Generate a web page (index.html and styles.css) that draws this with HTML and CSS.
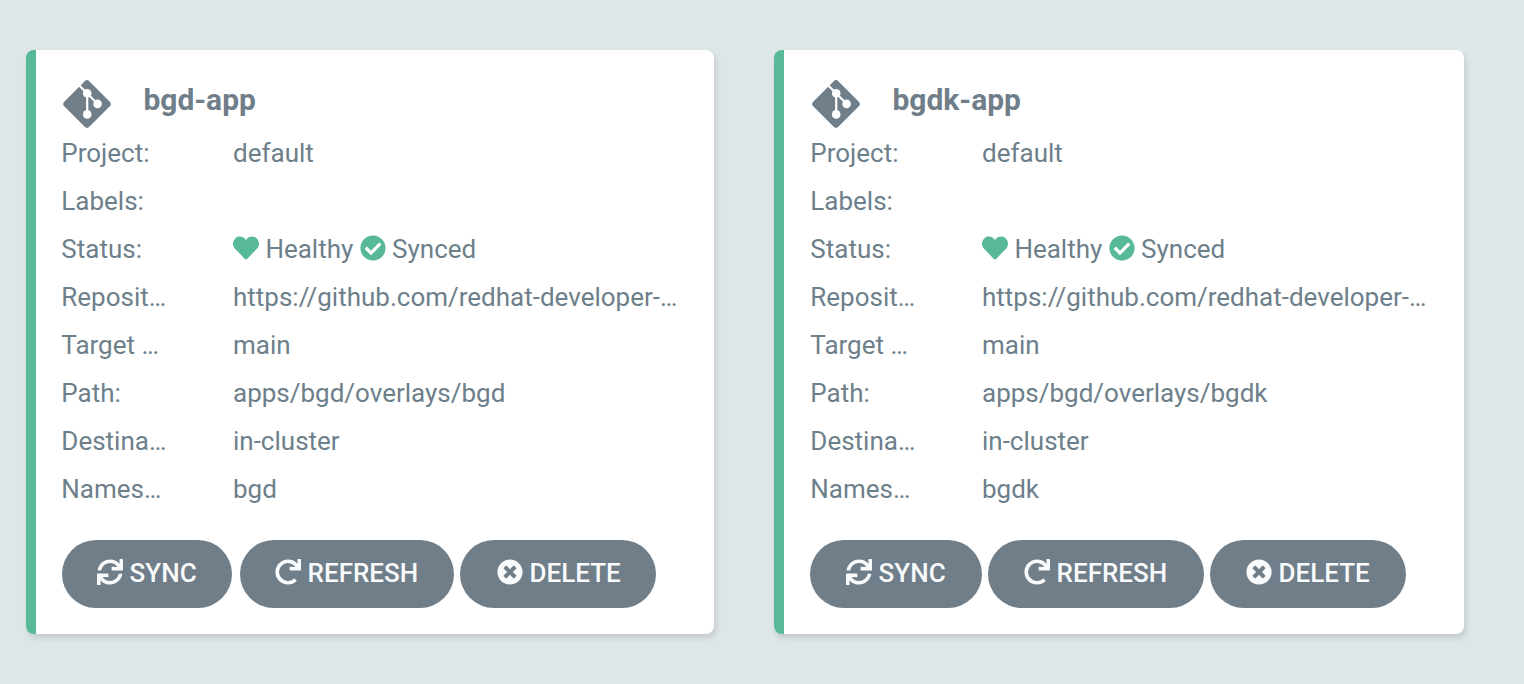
FILE: index.html
```html
<!DOCTYPE html>
<html lang="en">
<head>
<meta charset="utf-8">
<title>Applications</title>
<link rel="stylesheet" href="styles.css">
</head>
<body>
<svg class="sprite" aria-hidden="true">
  <symbol id="git" viewBox="0 0 48 48">
    <path d="M21.7 1.2Q24-1 26.3 1.2L46.8 21.7Q49 24 46.8 26.3L26.3 46.8Q24 49 21.7 46.8L1.2 26.3Q-1 24 1.2 21.7Z" fill="currentColor"/>
    <path d="M15.8 5 24 13.2 34.3 23.6M24.2 13V34" fill="none" stroke="#fff" stroke-width="2.2"/>
    <circle cx="24.2" cy="13.2" r="4.3" fill="#fff"/><circle cx="34.6" cy="23.9" r="4.3" fill="#fff"/><circle cx="24.2" cy="34.4" r="4.3" fill="#fff"/>
  </symbol>
  <symbol id="heart" viewBox="0 0 512 512"><path fill="currentColor" d="M462.3 62.6C407.5 15.9 326 24.3 275.7 76.2L256 96.5l-19.7-20.3C186.1 24.3 104.5 15.9 49.7 62.6c-62.8 53.6-66.1 149.8-9.9 207.9l193.5 199.8c12.5 12.9 32.8 12.9 45.3 0l193.5-199.8c56.3-58.1 53-154.3-9.8-207.9z"/></symbol>
  <symbol id="check" viewBox="0 0 512 512"><path fill="currentColor" d="M504 256c0 136.967-111.033 248-248 248S8 392.967 8 256 119.033 8 256 8s248 111.033 248 248zM227.314 387.314l184-184c6.248-6.248 6.248-16.379 0-22.627l-22.627-22.627c-6.248-6.249-16.379-6.249-22.628 0L216 308.118l-70.059-70.059c-6.248-6.248-16.379-6.248-22.628 0l-22.627 22.627c-6.248 6.248-6.248 16.379 0 22.627l104 104c6.249 6.249 16.379 6.249 22.628.001z"/></symbol>
  <symbol id="times" viewBox="0 0 512 512"><path fill="currentColor" d="M256 8C119 8 8 119 8 256s111 248 248 248 248-111 248-248S393 8 256 8zm121.6 313.1c4.7 4.7 4.7 12.3 0 17L338 377.6c-4.7 4.7-12.3 4.7-17 0L256 312l-65.1 65.6c-4.7 4.7-12.3 4.7-17 0L134.4 338c-4.7-4.7-4.7-12.3 0-17l65.6-65-65.6-65.1c-4.7-4.7-4.7-12.3 0-17l39.6-39.6c4.7-4.7 12.3-4.7 17 0l65 65.7 65.1-65.6c4.7-4.7 12.3-4.7 17 0l39.6 39.6c4.7 4.7 4.7 12.3 0 17L312 256l65.6 65.1z"/></symbol>
  <symbol id="redo" viewBox="0 0 512 512"><path fill="currentColor" d="M500.33 0h-47.41a12 12 0 0 0-12 12.57l4 82.76A247.42 247.42 0 0 0 256 8C119.34 8 7.9 119.53 8 256.19 8.1 393.07 119.1 504 256 504a247.1 247.1 0 0 0 166.18-63.91 12 12 0 0 0 .48-17.43l-34-34a12 12 0 0 0-16.38-.55A176 176 0 1 1 402.1 157.8l-101.53-4.87a12 12 0 0 0-12.57 12v47.41a12 12 0 0 0 12 12h200.33a12 12 0 0 0 12-12V12a12 12 0 0 0-12-12z"/></symbol>
  <symbol id="sync" viewBox="0 0 512 512"><path fill="currentColor" d="M440.65 12.57l4 82.77A247.16 247.16 0 0 0 255.83 8C134.73 8 33.91 94.92 12.29 209.82A12 12 0 0 0 24.09 224h49.05a12 12 0 0 0 11.67-9.26 175.91 175.91 0 0 1 317-56.94l-101.46-4.86a12 12 0 0 0-12.57 12v47.41a12 12 0 0 0 12 12H500a12 12 0 0 0 12-12V12a12 12 0 0 0-12-12h-47.37a12 12 0 0 0-11.98 12.57zM255.83 432a175.61 175.61 0 0 1-146-77.8l101.8 4.87a12 12 0 0 0 12.57-12v-47.4a12 12 0 0 0-12-12H12a12 12 0 0 0-12 12V500a12 12 0 0 0 12 12h47.35a12 12 0 0 0 12-12.6l-4.15-82.57A247.17 247.17 0 0 0 255.83 504c121.11 0 221.93-86.92 243.55-201.82a12 12 0 0 0-11.8-14.18h-49.05a12 12 0 0 0-11.67 9.26A175.86 175.86 0 0 1 255.83 432z"/></symbol>
</svg>
<main class="tiles">
  <article class="card">
    <header class="head"><svg class="git"><use href="#git"/></svg><h2 class="title">bgd-app</h2></header>
    <dl class="info">
      <dt>Project:</dt><dd>default</dd>
      <dt>Labels:</dt><dd></dd>
      <dt>Status:</dt><dd class="status"><svg class="icon ok"><use href="#heart"/></svg><span class="health">Healthy</span><svg class="icon ok"><use href="#check"/></svg><span>Synced</span></dd>
      <dt>Reposit…</dt><dd>https://github.com/redhat-developer-…</dd>
      <dt>Target …</dt><dd>main</dd>
      <dt>Path:</dt><dd>apps/bgd/overlays/bgd</dd>
      <dt>Destina…</dt><dd>in-cluster</dd>
      <dt>Names…</dt><dd>bgd</dd>
    </dl>
    <div class="actions">
      <button class="btn sync"><svg class="icon"><use href="#sync"/></svg>SYNC</button>
      <button class="btn refresh"><svg class="icon"><use href="#redo"/></svg>REFRESH</button>
      <button class="btn delete"><svg class="icon"><use href="#times"/></svg>DELETE</button>
    </div>
  </article>
  <article class="card second">
    <header class="head"><svg class="git"><use href="#git"/></svg><h2 class="title">bgdk-app</h2></header>
    <dl class="info">
      <dt>Project:</dt><dd>default</dd>
      <dt>Labels:</dt><dd></dd>
      <dt>Status:</dt><dd class="status"><svg class="icon ok"><use href="#heart"/></svg><span class="health">Healthy</span><svg class="icon ok"><use href="#check"/></svg><span>Synced</span></dd>
      <dt>Reposit…</dt><dd>https://github.com/redhat-developer-…</dd>
      <dt>Target …</dt><dd>main</dd>
      <dt>Path:</dt><dd>apps/bgd/overlays/bgdk</dd>
      <dt>Destina…</dt><dd>in-cluster</dd>
      <dt>Names…</dt><dd>bgdk</dd>
    </dl>
    <div class="actions">
      <button class="btn sync"><svg class="icon"><use href="#sync"/></svg>SYNC</button>
      <button class="btn refresh"><svg class="icon"><use href="#redo"/></svg>REFRESH</button>
      <button class="btn delete"><svg class="icon"><use href="#times"/></svg>DELETE</button>
    </div>
  </article>
</main>
</body>
</html>
```
FILE: styles.css
```css
* { box-sizing: border-box; }
body {
  margin: 0;
  min-height: 684px;
  overflow: hidden;
  background: #dee6e9;
  color: #6d7f8b;
  font: 26px/48px Roboto, sans-serif;
}
.sprite { display: none; }
.tiles {
  display: grid;
  grid-template-columns: 688px 690px;
  column-gap: 60px;
  padding: 50px 0 0 26px;
}
.card {
  height: 584px;
  padding: 30px 0 0 26px;
  border-left: 10px solid #57b998;
  border-radius: 8px;
  background: #fff;
  box-shadow: 2px 4px 6px rgba(0, 0, 0, .12);
}
.card.second { padding-left: 27px; }
.head { display: flex; height: 49px; color: #707e89; }
.git { width: 48px; height: 48px; margin-left: 1px; }
.title {
  margin: 0 0 0 32.4px;
  font-size: 30px;
  line-height: 40px;
  font-weight: 700;
}
.info {
  display: grid;
  grid-template-columns: 171.7px 460px;
  grid-auto-rows: 48px;
  margin: 0 0 0 -0.7px;
  white-space: nowrap;
}
.info dd { margin: 0; }
.icon { width: 26px; height: 26px; flex: none; margin-bottom: 2px; }
.ok { color: #57b998; }
.status { display: flex; align-items: center; gap: 6.4px; }
.actions { display: flex; margin-top: 27px; }
.second .actions { margin-left: -1px; }
.btn {
  display: flex;
  align-items: center;
  height: 68px;
  padding: 0 0 2px 35px;
  gap: 6.6px;
  border: 0;
  border-radius: 34px;
  background: #707e89;
  color: #f8fafb;
  font: 500 26px/48px Roboto, sans-serif;
}
.sync { width: 170px; margin-right: 8px; }
.refresh { width: 214px; margin-right: 6px; }
.delete { width: 196px; padding-left: 37px; }
.second .sync { width: 172px; margin-right: 6px; padding-left: 36px; }
.second .refresh { width: 216px; padding-left: 36px; }
.second .delete { padding-left: 36px; }
```
